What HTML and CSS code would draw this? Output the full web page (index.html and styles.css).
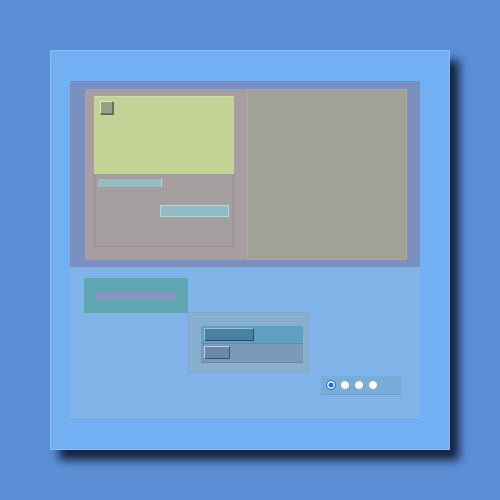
FILE: index.html
```html
<!DOCTYPE html>
<html>
<head>
<meta charset="utf-8">
<link rel="stylesheet" href="styles.css">
</head>
<body>
<div class="panel">
  <div class="inner">
    <div class="top">
      <div class="pink">
        <div class="green"><span class="check"></span></div>
        <div class="grey">
          <div class="bar1"></div>
          <div class="bar2"></div>
        </div>
      </div>
      <div class="olive"></div>
    </div>
    <div class="bottom">
      <div class="teal"><div class="tealbar"></div></div>
      <div class="box">
        <div class="row row1"><span class="btn btn1"></span></div>
        <div class="row row2"><span class="btn btn2"></span></div>
      </div>
      <div class="radios">
        <span class="radio on"></span>
        <span class="radio"></span>
        <span class="radio"></span>
        <span class="radio"></span>
      </div>
    </div>
  </div>
</div>
</body>
</html>
```
FILE: styles.css
```css
html, body { margin: 0; padding: 0; }
body {
  background: #5b8fd6;
  width: 500px;
  height: 500px;
  overflow: hidden;
  font-family: "Liberation Sans", sans-serif;
}
.panel {
  margin: 50px 0 0 50px;
  width: 400px;
  height: 400px;
  box-sizing: border-box;
  padding: 30px 29px 29px 19px;
  background: #73aff3;
  box-shadow: 9px 10px 9px rgba(12, 22, 45, 0.9);
  border: 1px solid #86bdf5;
  border-right-color: #8cc2f8;
  border-bottom-color: #8cc2f8;
}
.inner {
  width: 350px;
  height: 339px;
  display: flex;
  flex-direction: column;
}
.top {
  height: 186px;
  box-sizing: border-box;
  background: #7a90c0;
  padding: 8px 13px 7px 15px;
  display: flex;
}
.pink {
  width: 162px;
  box-sizing: border-box;
  background: #a89ea2;
  padding: 7px 13px 13px 9px;
  display: flex;
  flex-direction: column;
}
.green {
  height: 78px;
  background: #c3d396;
  border-top: 1px solid #cfdca6;
  box-sizing: border-box;
  padding: 4px 0 0 6px;
}
.check {
  display: block;
  width: 13px;
  height: 13px;
  box-sizing: border-box;
  background: #989f89;
  border: 1px solid #6d7560;
  border-top-color: #dfe6c8;
  border-left-color: #dfe6c8;
  box-shadow: 1px 1px 0 #5d6452;
}
.grey {
  flex: 1;
  background: #a49e9e;
  border: 1px solid #968f92;
  border-top: none;
}
.bar1 {
  margin: 5px 0 0 3px;
  width: 63px;
  height: 8px;
  background: #94bcc2;
  border-right: 1px solid #b8d6d8;
}
.bar2 {
  margin: 18px 0 0 65px;
  width: 69px;
  height: 12px;
  box-sizing: border-box;
  background: #92bcc4;
  border: 1px solid #b6d8dc;
}
.olive {
  width: 160px;
  box-sizing: border-box;
  background: #a1a195;
  border: 1px solid #b0a898;
  border-left-color: #b8a6a6;
}
.bottom {
  flex: 1;
  background: #80b4e8;
  padding: 11px 0 0 14px;
  border-bottom: 1px solid #76a8dd;
  display: flex;
  flex-direction: column;
  align-items: flex-start;
}
.teal {
  width: 104px;
  height: 35px;
  box-sizing: border-box;
  background: #5fa5b2;
  padding: 14px 0 0 12px;
}
.tealbar {
  width: 80px;
  height: 7px;
  background: #8a95c2;
}
.box {
  margin: -1px 0 0 104px;
  width: 121px;
  height: 61px;
  box-sizing: border-box;
  background: #88afd0;
  border: 1px solid #80a8cc;
  padding: 13px 0 0 12px;
}
.row {
  width: 102px;
  box-sizing: border-box;
  padding: 2px 0 0 3px;
}
.row1 { height: 18px; background: #5fa1c1; border-bottom: 1px solid #5b8fac; }
.row2 { height: 19px; background: #7b9ab9; border-bottom: 1px solid #6c87a6; }
.btn {
  display: block;
  height: 13px;
  box-sizing: border-box;
}
.btn1 {
  width: 50px;
  background: #4a80a2;
  border: 1px solid #2a4d66;
  border-top-color: #8ec2dc;
  border-left-color: #8ec2dc;
}
.btn2 {
  width: 26px;
  background: #6a89aa;
  border: 1px solid #3a5470;
  border-top-color: #b8d0ea;
  border-left-color: #b8d0ea;
}
.radios {
  margin: 2px 0 0 236px;
  width: 82px;
  height: 20px;
  box-sizing: border-box;
  background: #78acd9;
  border: 1px solid #84b6e2;
  border-bottom-color: #6c9cc8;
  display: flex;
  align-items: center;
  gap: 4px;
  padding-left: 5px;
}
.radio {
  width: 10px;
  height: 10px;
  box-sizing: border-box;
  border-radius: 50%;
  background: #ffffff;
  border: 1px solid #8a9cb0;
}
.radio.on {
  background: #1a6fe6;
  border: 1px solid #1a6fe6;
  box-shadow: inset 0 0 0 1.5px #ffffff;
}
```
